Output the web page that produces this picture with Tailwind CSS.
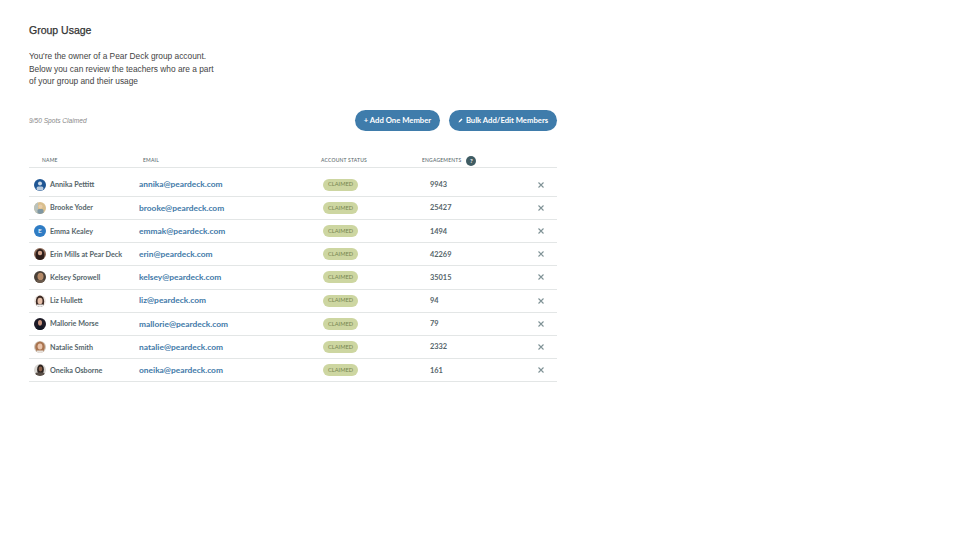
<!DOCTYPE html>
<html lang="en">
<head>
  <meta charset="UTF-8" />
  <title>Group Usage</title>
  <script src="https://cdn.jsdelivr.net/npm/@tailwindcss/browser@4"></script>
</head>
<body class="bg-white font-['Lato',sans-serif] overflow-hidden">
  <main class="w-[960px] h-[540px] pl-[29px] pt-[23.5px]">
    <div class="w-[528px]">
      <h1 class="font-['Liberation_Sans',sans-serif] text-[10.5px] leading-[13px] font-normal text-[#333] [-webkit-text-stroke:0.25px_#333]">Group Usage</h1>
      <p class="mt-[13.5px] font-['Liberation_Sans',sans-serif] text-[8.35px] leading-[12.5px] text-[#444]">You're the owner of a Pear Deck group account.<br>Below you can review the teachers who are a part<br>of your group and their usage</p>

      <div class="mt-[22.5px] h-[21px] flex items-center justify-between">
        <span class="font-['Liberation_Sans',sans-serif] italic text-[6.6px] text-[#888]">9/50 Spots Claimed</span>
        <div class="flex gap-[9px]">
          <button class="w-[85px] h-[21px] rounded-full bg-[#3f7cab] text-white text-[7.7px] font-bold">+ Add One Member</button>
          <button class="w-[108px] h-[21px] rounded-full bg-[#3f7cab] text-white text-[7.7px] font-bold flex items-center justify-center gap-[3px]">
            <svg class="w-[5px] h-[5px]" viewBox="0 0 10 10" fill="#fff"><path d="M1 9l1-3 5-5 2 2-5 5z"/></svg>
            Bulk Add/Edit Members
          </button>
        </div>
      </div>

      <div class="mt-[23px] h-[14px] flex items-center border-b border-[#e3e6e6] text-[5px] text-[#5a6a6e] font-medium tracking-[0.2px] uppercase">
        <span class="w-[114px] pl-[13px]">Name</span>
        <span class="w-[178px]">Email</span>
        <span class="w-[101px]">Account Status</span>
        <span class="flex items-center gap-[5px]">Engagements
          <span class="w-[10px] h-[10px] rounded-full bg-[#3f5c63] text-white text-[6px] font-bold flex items-center justify-center">?</span>
        </span>
      </div>

      <div class="text-[#55656a]">
        <!-- rows -->
        <div class="h-[23.2px] mt-[5.6px] flex items-center border-b border-[#e3e6e6]">
          <div class="w-[110px] flex items-center">
            <svg class="ml-[5px] w-[12px] h-[12px] shrink-0 rounded-full" viewBox="0 0 12 12"><rect width="12" height="12" fill="#1f5694"/><circle cx="6" cy="4.6" r="2" fill="#cfdbe8"/><rect x="2.6" y="7.4" width="6.8" height="4" rx="1.5" fill="#b9cbde"/></svg>
            <span class="ml-[4px] text-[7.2px] leading-[13px] font-bold whitespace-nowrap">Annika Pettitt</span>
          </div>
          <a class="w-[184px] text-[8.4px] font-bold text-[#4179a8]">annika@peardeck.com</a>
          <div class="w-[107px]"><span class="w-[35px] h-[12px] rounded-full bg-[#cdd6a1] text-[#76854f] text-[5.7px] flex items-center justify-center">CLAIMED</span></div>
          <span class="w-[108px] text-[7.4px] font-bold">9943</span>
          <svg class="w-[6px] h-[6px]" viewBox="0 0 6 6" stroke="#7f9296" stroke-width="1.1"><path d="M.5.5l5 5M5.500.5l-5 5"/></svg>
        </div>
        <div class="h-[23.2px] flex items-center border-b border-[#e3e6e6]">
          <div class="w-[110px] flex items-center">
            <svg class="ml-[5px] w-[12px] h-[12px] shrink-0 rounded-full" viewBox="0 0 12 12"><rect width="12" height="12" fill="#d9bf8e"/><rect x="0" y="0" width="4" height="12" fill="#b9c2bd"/><circle cx="6.5" cy="4.500" r="2" fill="#e8cdaa"/><rect x="3.500" y="7" width="6" height="5" rx="1.500" fill="#7f97a3"/></svg>
            <span class="ml-[4px] text-[7.2px] leading-[13px] font-bold whitespace-nowrap">Brooke Yoder</span>
          </div>
          <a class="w-[184px] text-[8.4px] font-bold text-[#4179a8]">brooke@peardeck.com</a>
          <div class="w-[107px]"><span class="w-[35px] h-[12px] rounded-full bg-[#cdd6a1] text-[#76854f] text-[5.7px] flex items-center justify-center">CLAIMED</span></div>
          <span class="w-[108px] text-[7.4px] font-bold">25427</span>
          <svg class="w-[6px] h-[6px]" viewBox="0 0 6 6" stroke="#7f9296" stroke-width="1.1"><path d="M.5.5l5 5M5.500.5l-5 5"/></svg>
        </div>
        <div class="h-[23.2px] flex items-center border-b border-[#e3e6e6]">
          <div class="w-[110px] flex items-center">
            <span class="ml-[5px] w-[12px] h-[12px] shrink-0 rounded-full bg-[#2f7cc4] text-white text-[6.5px] flex items-center justify-center">E</span>
            <span class="ml-[4px] text-[7.2px] leading-[13px] font-bold whitespace-nowrap">Emma Kealey</span>
          </div>
          <a class="w-[184px] text-[8.4px] font-bold text-[#4179a8]">emmak@peardeck.com</a>
          <div class="w-[107px]"><span class="w-[35px] h-[12px] rounded-full bg-[#cdd6a1] text-[#76854f] text-[5.7px] flex items-center justify-center">CLAIMED</span></div>
          <span class="w-[108px] text-[7.4px] font-bold">1494</span>
          <svg class="w-[6px] h-[6px]" viewBox="0 0 6 6" stroke="#7f9296" stroke-width="1.1"><path d="M.5.5l5 5M5.500.5l-5 5"/></svg>
        </div>
        <div class="h-[23.2px] flex items-center border-b border-[#e3e6e6]">
          <div class="w-[110px] flex items-center">
            <svg class="ml-[5px] w-[12px] h-[12px] shrink-0 rounded-full" viewBox="0 0 12 12"><rect width="12" height="12" fill="#8d6a58"/><ellipse cx="6" cy="7" rx="4.500" ry="6" fill="#2c1d1a"/><circle cx="6" cy="5" r="2.200" fill="#d4a68e"/></svg>
            <span class="ml-[4px] text-[7.2px] leading-[13px] font-bold whitespace-nowrap">Erin Mills at Pear Deck</span>
          </div>
          <a class="w-[184px] text-[8.4px] font-bold text-[#4179a8]">erin@peardeck.com</a>
          <div class="w-[107px]"><span class="w-[35px] h-[12px] rounded-full bg-[#cdd6a1] text-[#76854f] text-[5.7px] flex items-center justify-center">CLAIMED</span></div>
          <span class="w-[108px] text-[7.4px] font-bold">42269</span>
          <svg class="w-[6px] h-[6px]" viewBox="0 0 6 6" stroke="#7f9296" stroke-width="1.1"><path d="M.5.5l5 5M5.500.5l-5 5"/></svg>
        </div>
        <div class="h-[23.2px] flex items-center border-b border-[#e3e6e6]">
          <div class="w-[110px] flex items-center">
            <svg class="ml-[5px] w-[12px] h-[12px] shrink-0 rounded-full" viewBox="0 0 12 12"><rect width="12" height="12" fill="#4a4038"/><ellipse cx="6.500" cy="5.500" rx="3" ry="3.800" fill="#b58a68"/><rect x="2.500" y="9" width="8" height="3" fill="#6b5a4c"/></svg>
            <span class="ml-[4px] text-[7.2px] leading-[13px] font-bold whitespace-nowrap">Kelsey Sprowell</span>
          </div>
          <a class="w-[184px] text-[8.4px] font-bold text-[#4179a8]">kelsey@peardeck.com</a>
          <div class="w-[107px]"><span class="w-[35px] h-[12px] rounded-full bg-[#cdd6a1] text-[#76854f] text-[5.7px] flex items-center justify-center">CLAIMED</span></div>
          <span class="w-[108px] text-[7.4px] font-bold">35015</span>
          <svg class="w-[6px] h-[6px]" viewBox="0 0 6 6" stroke="#7f9296" stroke-width="1.1"><path d="M.5.5l5 5M5.500.5l-5 5"/></svg>
        </div>
        <div class="h-[23.2px] flex items-center border-b border-[#e3e6e6]">
          <div class="w-[110px] flex items-center">
            <svg class="ml-[5px] w-[12px] h-[12px] shrink-0 rounded-full" viewBox="0 0 12 12"><rect width="12" height="12" fill="#f0e9e4"/><ellipse cx="6" cy="6.500" rx="4.200" ry="6" fill="#3d2a24"/><ellipse cx="6" cy="6" rx="2.500" ry="3.200" fill="#e6c0aa"/><rect x="3" y="9.500" width="6" height="3" fill="#eee"/></svg>
            <span class="ml-[4px] text-[7.2px] leading-[13px] font-bold whitespace-nowrap">Liz Hullett</span>
          </div>
          <a class="w-[184px] text-[8.4px] font-bold text-[#4179a8]">liz@peardeck.com</a>
          <div class="w-[107px]"><span class="w-[35px] h-[12px] rounded-full bg-[#cdd6a1] text-[#76854f] text-[5.7px] flex items-center justify-center">CLAIMED</span></div>
          <span class="w-[108px] text-[7.4px] font-bold">94</span>
          <svg class="w-[6px] h-[6px]" viewBox="0 0 6 6" stroke="#7f9296" stroke-width="1.1"><path d="M.5.5l5 5M5.500.5l-5 5"/></svg>
        </div>
        <div class="h-[23.2px] flex items-center border-b border-[#e3e6e6]">
          <div class="w-[110px] flex items-center">
            <svg class="ml-[5px] w-[12px] h-[12px] shrink-0 rounded-full" viewBox="0 0 12 12"><rect width="12" height="12" fill="#1d1a26"/><ellipse cx="6" cy="4.800" rx="2" ry="2.800" fill="#c8937c"/><rect x="3" y="8" width="6" height="4" fill="#101522"/></svg>
            <span class="ml-[4px] text-[7.2px] leading-[13px] font-bold whitespace-nowrap">Mallorie Morse</span>
          </div>
          <a class="w-[184px] text-[8.4px] font-bold text-[#4179a8]">mallorie@peardeck.com</a>
          <div class="w-[107px]"><span class="w-[35px] h-[12px] rounded-full bg-[#cdd6a1] text-[#76854f] text-[5.7px] flex items-center justify-center">CLAIMED</span></div>
          <span class="w-[108px] text-[7.4px] font-bold">79</span>
          <svg class="w-[6px] h-[6px]" viewBox="0 0 6 6" stroke="#7f9296" stroke-width="1.1"><path d="M.5.5l5 5M5.500.5l-5 5"/></svg>
        </div>
        <div class="h-[23.2px] flex items-center border-b border-[#e3e6e6]">
          <div class="w-[110px] flex items-center">
            <svg class="ml-[5px] w-[12px] h-[12px] shrink-0 rounded-full" viewBox="0 0 12 12"><rect width="12" height="12" fill="#cfc4b8"/><ellipse cx="6" cy="6" rx="4.800" ry="5.500" fill="#a9744f"/><ellipse cx="6" cy="5.500" rx="2.400" ry="3" fill="#e9c4ab"/><rect x="3" y="9.500" width="6" height="3" fill="#e7e2dd"/></svg>
            <span class="ml-[4px] text-[7.2px] leading-[13px] font-bold whitespace-nowrap">Natalie Smith</span>
          </div>
          <a class="w-[184px] text-[8.4px] font-bold text-[#4179a8]">natalie@peardeck.com</a>
          <div class="w-[107px]"><span class="w-[35px] h-[12px] rounded-full bg-[#cdd6a1] text-[#76854f] text-[5.7px] flex items-center justify-center">CLAIMED</span></div>
          <span class="w-[108px] text-[7.4px] font-bold">2332</span>
          <svg class="w-[6px] h-[6px]" viewBox="0 0 6 6" stroke="#7f9296" stroke-width="1.1"><path d="M.5.5l5 5M5.500.5l-5 5"/></svg>
        </div>
        <div class="h-[23.2px] flex items-center border-b border-[#e3e6e6]">
          <div class="w-[110px] flex items-center">
            <svg class="ml-[5px] w-[12px] h-[12px] shrink-0 rounded-full" viewBox="0 0 12 12"><rect width="12" height="12" fill="#d8d6d2"/><ellipse cx="6.500" cy="5.500" rx="3.400" ry="5" fill="#2e2420"/><ellipse cx="6.500" cy="5" rx="1.800" ry="2.400" fill="#8a5f48"/><rect x="1" y="8.500" width="10" height="4" rx="2" fill="#5a5048"/></svg>
            <span class="ml-[4px] text-[7.2px] leading-[13px] font-bold whitespace-nowrap">Oneika Osborne</span>
          </div>
          <a class="w-[184px] text-[8.4px] font-bold text-[#4179a8]">oneika@peardeck.com</a>
          <div class="w-[107px]"><span class="w-[35px] h-[12px] rounded-full bg-[#cdd6a1] text-[#76854f] text-[5.7px] flex items-center justify-center">CLAIMED</span></div>
          <span class="w-[108px] text-[7.4px] font-bold">161</span>
          <svg class="w-[6px] h-[6px]" viewBox="0 0 6 6" stroke="#7f9296" stroke-width="1.1"><path d="M.5.5l5 5M5.500.5l-5 5"/></svg>
        </div>
      </div>
    </div>
  </main>
</body>
</html>
